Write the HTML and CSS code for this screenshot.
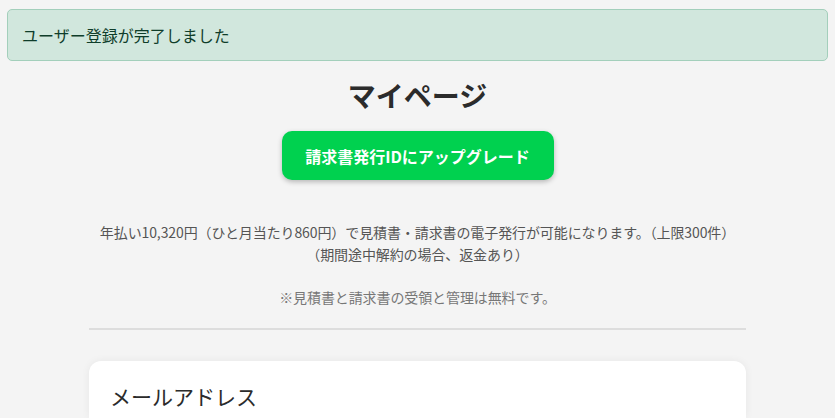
FILE: index.html
```html
<!DOCTYPE html>
<html lang="ja">
<head>
<meta charset="utf-8">
<link rel="stylesheet" href="styles.css">
</head>
<body>
<div class="page">
  <div class="alert">ユーザー登録が完了しました</div>
  <h1 class="title">マイページ</h1>
  <div class="btn-wrap"><button class="upgrade">請求書発行IDにアップグレード</button></div>
  <p class="desc">年払い10,320円（ひと月当たり860円）で見積書・請求書の電子発行が可能になります。（上限300件）<br>（期間途中解約の場合、返金あり）</p>
  <p class="note">※見積書と請求書の受領と管理は無料です。</p>
  <div class="main">
    <hr class="rule">
    <section class="card">
      <h2 class="card-title">メールアドレス</h2>
    </section>
  </div>
</div>
</body>
</html>
```
FILE: styles.css
```css
* { box-sizing: border-box; }
html, body { margin: 0; padding: 0; }
body {
  background: #f4f4f4;
  font-family: "Noto Sans CJK JP", "Noto Sans", sans-serif;
  color: #333;
  height: 418px;
  overflow: hidden;
}
.page { padding: 9px 7px 0; }
.alert {
  background: #d1e7dd;
  border: 1px solid #a3cfbb;
  color: #0f3d2a;
  border-radius: 5px;
  height: 52px;
  padding: 0 14px;
  display: flex;
  align-items: center;
  font-size: 16px;
}
.title {
  margin: 14px 0 0;
  text-align: center;
  font-size: 28px;
  font-weight: 700;
  line-height: 40px;
  color: #2b2b2b;
}
.btn-wrap { display: flex; justify-content: center; margin-top: 16px; }
.upgrade {
  width: 272px;
  height: 49px;
  border: none;
  border-radius: 10px;
  background: #00d14f;
  color: #fff;
  font-family: inherit;
  font-size: 16px;
  font-weight: 700;
  box-shadow: 0 2px 5px rgba(0,0,0,0.25);
}
.desc {
  margin: 41px 0 0;
  text-align: center;
  font-size: 14px;
  line-height: 22px;
  letter-spacing: -0.1px;
  color: #555;
}
.note {
  margin: 21px 0 0;
  text-align: center;
  font-size: 14px;
  line-height: 22px;
  letter-spacing: -0.1px;
  color: #777;
}
.main { width: 657px; margin: 0 auto; }
.rule {
  margin: 20px 0 0;
  border: none;
  border-top: 2px solid #ddd;
}
.card {
  margin-top: 31px;
  background: #fff;
  border-radius: 12px 12px 0 0;
  box-shadow: 0 0 8px rgba(0,0,0,0.06);
  padding: 19px 21px 0;
  height: 57px;
}
.card-title {
  margin: 0;
  font-size: 21px;
  font-weight: 400;
  line-height: 32px;
  color: #2b2b2b;
}
```
